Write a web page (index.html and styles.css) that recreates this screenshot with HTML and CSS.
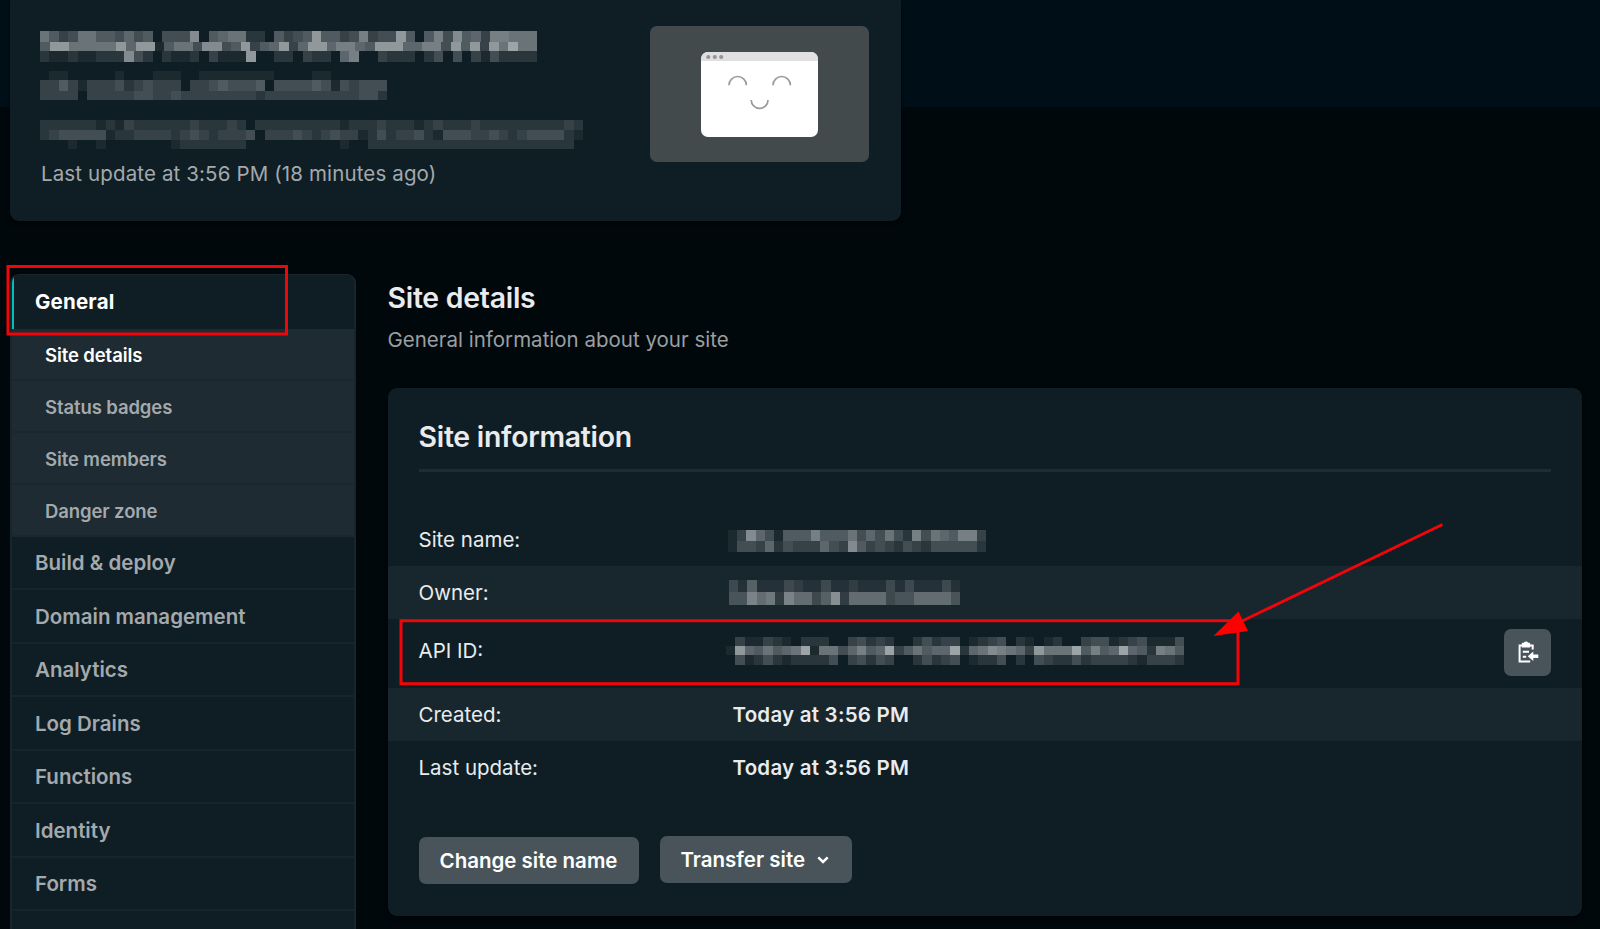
FILE: index.html
```html
<!DOCTYPE html>
<html lang="en">
<head>
<meta charset="utf-8">
<title>Site settings</title>
<link rel="stylesheet" href="styles.css">
</head>
<body>
<header class="site-card">
  <div class="site-meta">
    <div class="mosaic mosaic-title" data-heights="11,9,11" data-rows="75347755464504449056772205345a55348344a50584956388777|5aa77777a6aa157749945a356a36aa68865aaa66884a5a3a7b77|2112112229420211203111a002203220680032220240403142222"></div>
    <div class="mosaic mosaic-sub" data-heights="9,11,9" data-rows="0110000010001110011111111000011000000|3353133342343330334544450444454143444|3333033333443343333333323333333333442"></div>
    <div class="mosaic mosaic-deploy" data-heights="10,10,9" data-rows="2222221213222222322232022222222212223222123222322222222232|2344444122333323432333403334323433124233421444334323444421|0001001000000012222222000000000010022222222222222222222220"></div>
    <p class="updated"><span>Last update at 3:56 PM (18 minutes ago)</span></p>
  </div>
  <div class="preview">
    <svg class="preview-window" viewBox="0 0 117 85">
      <rect width="117" height="85" rx="7" fill="#fff"/>
      <path d="M0 9V7a7 7 0 0 1 7-7h103a7 7 0 0 1 7 7v2z" fill="#e0e0e0"/>
      <g fill="#959595"><circle cx="7.3" cy="5" r="2.1"/><circle cx="13.8" cy="5" r="2.1"/><circle cx="20.2" cy="5" r="2.1"/></g>
      <path d="M28 33.2a8.7 8.7 0 0 1 17.4 0M72 33.2a8.7 8.7 0 0 1 17.4 0M50.2 48a8.2 8.2 0 0 0 16.8 0" fill="none" stroke="#9b9b9b" stroke-width="1.7"/>
    </svg>
  </div>
</header>

<div class="layout">
  <nav class="sidebar">
    <a class="item current"><span>General</span></a>
    <div class="subnav">
      <a class="subitem active"><span>Site details</span></a>
      <a class="subitem"><span>Status badges</span></a>
      <a class="subitem"><span>Site members</span></a>
      <a class="subitem"><span>Danger zone</span></a>
    </div>
    <a class="item"><span>Build &amp; deploy</span></a>
    <a class="item"><span>Domain management</span></a>
    <a class="item"><span>Analytics</span></a>
    <a class="item"><span>Log Drains</span></a>
    <a class="item"><span>Functions</span></a>
    <a class="item"><span>Identity</span></a>
    <a class="item"><span>Forms</span></a>
    <a class="item"></a>
  </nav>

  <main class="main">
    <h1 class="heading"><span>Site details</span></h1>
    <p class="lead"><span>General information about your site</span></p>
    <section class="panel">
      <h2 class="heading panel-title"><span>Site information</span></h2>
      <dl class="rows">
        <div class="row"><dt><span>Site name:</span></dt><dd><div class="mosaic mosaic-name" data-heights="11,11" data-rows="1396415558555746474284765883|1443624333643953432432444442"></div></dd></div>
        <div class="row alt"><dt><span>Owner:</span></dt><dd><div class="mosaic mosaic-owner" data-heights="12,13" data-rows="3151113211311211131311131|4486728663592666634466664"></div></dd></div>
        <div class="row tall"><dt><span>API ID:</span></dt><dd><div class="mosaic mosaic-api" data-heights="9,9,10" data-rows="0311321022200342320024233012340210120034412341114|1a657567b17746856b357566b26798763a777b5856b652875|0412421222240342430024234012240204322423333213332"></div></dd>
          <button class="copy" aria-label="Copy API ID">
            <svg viewBox="0 0 24 24" width="24" height="24">
              <path d="M7 4.5H4.600V20.600H15.200M14.500 4.500h3.200v4" fill="none" stroke="#fff" stroke-width="2"/>
              <path d="M6.800 2.600q0-.9.900-.9h1.200Q9.300.6 11 .6t2.100 1.100h1.200q.9 0 .9.900v3.900H6.800z" fill="#fff"/>
              <path d="M7.800 10.800h6.200M7.800 15.800h3.400" fill="none" stroke="#fff" stroke-width="2"/>
              <path d="M12.700 15.300l5.600-4.800v3h5v3.600h-5v3z" fill="#fff"/>
            </svg>
          </button>
        </div>
        <div class="row alt"><dt><span>Created:</span></dt><dd><span>Today at 3:56 PM</span></dd></div>
        <div class="row"><dt><span>Last update:</span></dt><dd><span>Today at 3:56 PM</span></dd></div>
      </dl>
      <div class="actions">
        <button class="btn"><span>Change site name</span></button>
        <button class="btn btn-menu"><span>Transfer site</span>
          <svg viewBox="0 0 12 9" width="12" height="9"><path d="M1.300 2.300 6 7l4.700-4.700" fill="none" stroke="#fff" stroke-width="2.500"/></svg>
        </button>
      </div>
    </section>
  </main>
</div>

<svg class="annotations" viewBox="0 0 1600 929" fill="none" stroke="#f20509" stroke-width="3">
  <rect x="8" y="266.500" width="278.500" height="67.500"/>
  <rect x="401" y="620.700" width="837" height="63"/>
  <path d="M1442.500 524.500 1240 622"/>
  <path d="M1213.500 636 1238.500 611.500 1248 631z" fill="#f00" stroke="none"/>
</svg>
<script src="mosaic.js"></script>
</body>
</html>
```
FILE: mosaic.js
```js
// Draws redacted values as pixelated blocks; each hex digit is one cell's brightness.
document.querySelectorAll('.mosaic').forEach(function (el) {
  var rows = el.dataset.rows.split('|');
  var heights = el.dataset.heights.split(',').map(Number);
  var total = heights.reduce(function (a, b) { return a + b; }, 0);
  var width = el.clientWidth;
  var y = 0;
  var out = '';
  rows.forEach(function (row, r) {
    var step = width / row.length;
    for (var i = 0; i < row.length; i++) {
      var level = parseInt(row[i], 16);
      var x0 = Math.round(i * step);
      var x1 = Math.round((i + 1) * step);
      if (level) {
        out += '<rect x="' + x0 + '" y="' + y + '" width="' + (x1 - x0) + '" height="' + heights[r] +
          '" fill-opacity="' + (level * 0.057).toFixed(3) + '"/>';
      }
    }
    y += heights[r];
  });
  el.innerHTML = '<svg width="' + width + '" height="' + total + '" fill="#f2f4f6" shape-rendering="crispEdges">' + out + '</svg>';
});
```
FILE: styles.css
```css
* { box-sizing: border-box; }

body {
  margin: 0;
  width: 1600px;
  height: 929px;
  overflow: hidden;
  position: relative;
  background: linear-gradient(#000f17 107px, #01080b 107px);
  color: #e9ebed;
  font: 20.5px/28px Inter, "Liberation Sans", sans-serif;
}

h1, h2, p, dl, dd { margin: 0; }

.site-card {
  display: flex;
  justify-content: space-between;
  width: 891px;
  height: 221px;
  margin-left: 10px;
  padding: 26px 32px 0 30px;
  background: #0f1e25;
  border-radius: 0 0 9px 9px;
  box-shadow: 0 2px 4px rgba(0, 0, 0, .6);
}

.site-meta { padding-top: 5px; }
.mosaic svg { display: block; }
.mosaic-title { width: 497px; }
.mosaic-sub { width: 347px; margin-top: 9px; }
.mosaic-deploy { width: 543px; margin-top: 20px; }
.updated { margin: 11px 0 0 1px; color: #a3a9ac; letter-spacing: .13px; }

.preview {
  display: flex;
  justify-content: center;
  width: 219px;
  height: 136px;
  padding-top: 26px;
  border-radius: 7px;
  background: #434a4b;
}
.preview-window { width: 117px; height: 85px; }

.layout { display: flex; gap: 31.5px; margin: 52.5px 0 0 10px; }

.sidebar {
  width: 346px;
  height: 680px;
  flex: none;
  border: solid #18262c;
  border-width: 1px 2px;
  border-radius: 9px 9px 0 0;
  background: #0f1e25;
  color: #a3a9ac;
  font-weight: 600;
  overflow: hidden;
}
.item {
  display: flex;
  align-items: center;
  height: 53.5px;
  padding: 2px 0 0 23px;
  border-bottom: 2px solid #16252b;
}
.current { height: 54px; border-left: 2px solid #05bdba; border-bottom: 0; padding: 1px 0 0 21px; color: #fff; font-weight: 700; letter-spacing: .2px; }
.subnav { background: #1e2b32; font-size: 18.5px; letter-spacing: -.1px; }
.subitem { display: flex; align-items: center; height: 52px; padding: 2px 0 0 33px; border-bottom: 2px solid #1a272e; }
.subitem.active { color: #fff; }

.main { width: 1194px; }
.heading { font-size: 28.4px; font-weight: 600; line-height: 36px; letter-spacing: -.26px; }
.main > .heading { margin-top: 6.5px; }
.lead { margin-top: 10px; color: #9a9fa2; }

.panel {
  height: 528px;
  margin-top: 34px;
  padding-top: 31px;
  background: #0f1e25;
  border-radius: 9px;
  box-shadow: 0 2px 4px rgba(0, 0, 0, .6);
}
.panel-title { margin: 0 31px; padding-bottom: 14px; border-bottom: 3px solid #1f2d33; }
.rows { margin-top: 41px; }
.row { display: flex; align-items: center; height: 53px; padding: 0 31px; }
.row.alt { background: #18262d; }
.row.tall { height: 69px; padding-bottom: 5px; }
dt { width: 314px; }
dd { flex: 1; font-weight: 600; letter-spacing: .23px; }
.mosaic-name { width: 258px; margin-left: -5px; padding-top: 2px; }
.mosaic-owner { width: 231px; margin-left: -4px; }
.mosaic-api { width: 458px; margin-left: -7px; }

.copy {
  display: flex;
  align-items: center;
  justify-content: center;
  width: 47px;
  height: 47px;
  margin-top: 3px;
  padding: 0;
  border: 0;
  border-radius: 7px;
  background: #48545a;
}

.actions { display: flex; align-items: flex-start; gap: 21px; margin: 43px 31px 0; }
.btn {
  display: flex;
  align-items: center;
  justify-content: center;
  width: 220px;
  height: 47px;
  padding: 0;
  border: 0;
  border-radius: 7px;
  background: #48545a;
  color: #fff;
  font: 600 20.5px/28px Inter, "Liberation Sans", sans-serif;
}
.btn-menu { width: 192.5px; gap: 12px; margin-top: -1px; padding-right: 2px; }

.annotations { position: absolute; left: 0; top: 0; width: 1600px; height: 929px; }
```
